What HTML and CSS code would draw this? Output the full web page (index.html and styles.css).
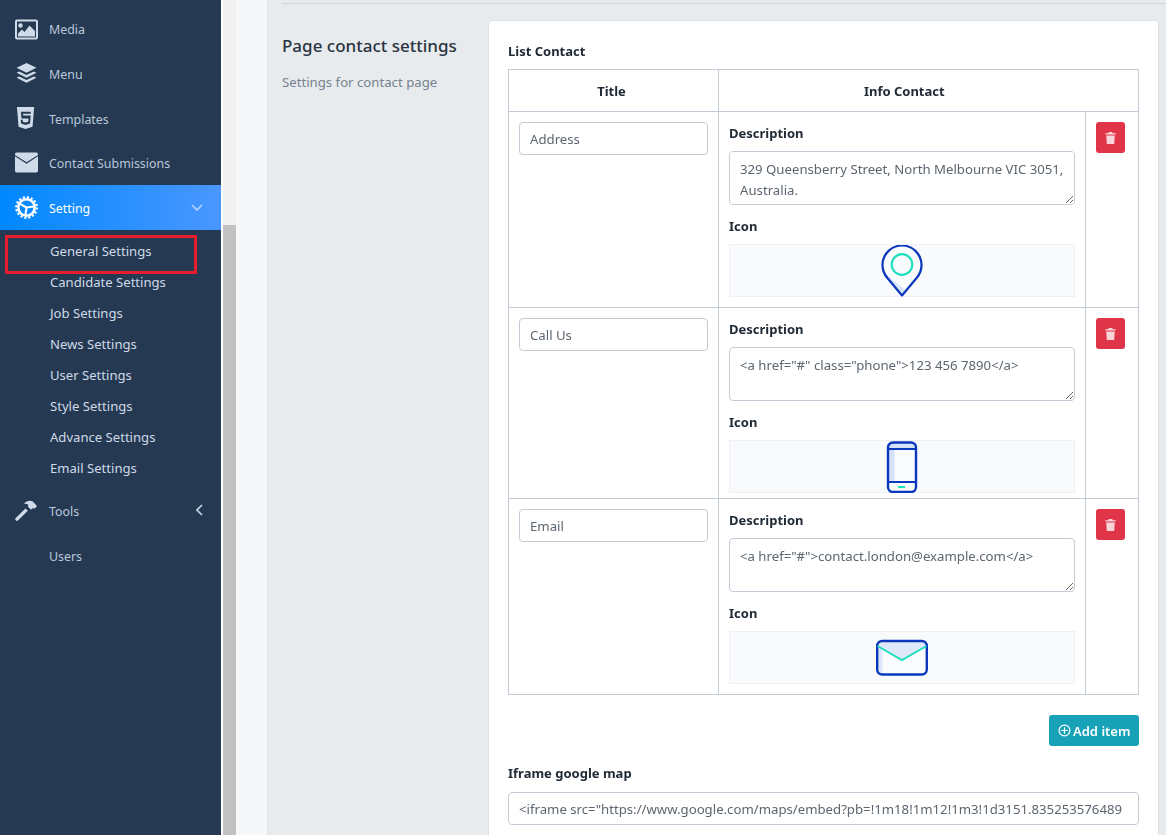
FILE: index.html
```html
<!DOCTYPE html>
<html lang="en">
<head>
    <meta charset="UTF-8">
    <title>Page contact settings</title>
    <link rel="stylesheet" href="styles.css">
</head>
<body>
    <aside class="sidebar">
        <a class="nav-item">
            <svg class="nav-icon" viewBox="0 0 23 20"><path fill="#cfdbe8" fill-rule="evenodd" d="M2 0h19a2 2 0 0 1 2 2v16a2 2 0 0 1-2 2H2a2 2 0 0 1-2-2V2a2 2 0 0 1 2-2zm0 2v16h19V2z"/><circle cx="5.5" cy="6" r="2.2" fill="#cfdbe8"/><path fill="#cfdbe8" d="M3 17v-3l4-4 2.5 2.500 5-6.500L20 11.500V17z"/></svg>
            <span>Media</span>
        </a>
        <a class="nav-item">
            <svg class="nav-icon" viewBox="0 0 22 20"><path fill="#cfdbe8" d="M11 0l9.500 4.600L11 9.200 1.500 4.600zM4 8l7 3.400L18 8l2.500 1.300L11 14 1.500 9.300zM4 12.800l7 3.400 7-3.400 2.500 1.300L11 18.800 1.500 14.100z"/></svg>
            <span>Menu</span>
        </a>
        <a class="nav-item">
            <svg class="nav-icon" viewBox="0 0 22 24"><path fill="#cfdbe8" fill-rule="evenodd" d="M1 0h18l-1.700 20.500L10 23l-7.300-2.500zM5.200 5l.6 7h7.300l-.3 3.400-2.800.9-2.800-.9-.2-2H5l.3 3.900 4.700 1.500 4.700-1.500.7-8.400H7.600L7.400 7h7.900l.2-2z"/></svg>
            <span>Templates</span>
        </a>
        <a class="nav-item">
            <svg class="nav-icon" viewBox="0 0 22 19"><path fill="#cfdbe8" d="M1.500 0h19A1.500 1.500 0 0 1 22 1.500v.8l-11 7-11-7v-.8A1.500 1.500 0 0 1 1.500 0zM0 3.600l11 7 11-7v13.900a1.500 1.500 0 0 1-1.500 1.500h-19A1.500 1.500 0 0 1 0 17.500z"/></svg>
            <span>Contact Submissions</span>
        </a>
        <a class="nav-item nav-active">
            <svg class="nav-icon" viewBox="0 0 22 22"><g fill="none" stroke="#fff"><circle cx="11" cy="11" r="7.800" stroke-width="2.400"/><circle cx="11" cy="11" r="9.800" stroke-width="2.200" stroke-dasharray="2 1.850"/><path stroke-width="2" d="M11 11L4 7M11 11l7-1M11 11l-1 7"/></g></svg>
            <span>Setting</span>
            <svg class="chevron-down" viewBox="0 0 12 7"><path fill="none" stroke="#b5d4fb" stroke-width="1.600" d="M1 1l5 5 5-5"/></svg>
        </a>
        <div class="submenu">
            <a>General Settings</a>
            <a>Candidate Settings</a>
            <a>Job Settings</a>
            <a>News Settings</a>
            <a>User Settings</a>
            <a>Style Settings</a>
            <a>Advance Settings</a>
            <a>Email Settings</a>
        </div>
        <a class="nav-item">
            <svg class="nav-icon" viewBox="0 0 22 20"><path fill="#cfdbe8" d="M.5 17.500L10 8l2.300 2.300-9.500 9.200a1.400 1.400 0 0 1-2-.1 1.400 1.400 0 0 1-.3-1.900zM8.500 3.500C11 .5 15 0 17 1.500l4 4.300-2.300 2.500-1.500-.8-1.800 1.800-3-3 .3-1.800c-1.200-1-3-1.300-4.700-.5z"/></svg>
            <span>Tools</span>
            <svg class="chevron-left" viewBox="0 0 7 12"><path fill="none" stroke="#c9d6e6" stroke-width="1.600" d="M6 1L1 6l5 5"/></svg>
        </a>
        <a class="nav-item nav-plain"><span>Users</span></a>
        <div class="highlight-box"></div>
    </aside>

    <div class="scroll-track"><div class="scroll-thumb"></div></div>
    <div class="gutter"></div>

    <main class="main">
        <hr class="divider">
        <section class="settings-group">
            <div class="group-info">
                <h2>Page contact settings</h2>
                <p>Settings for contact page</p>
            </div>
            <div class="card">
                <label class="field-label list-label">List Contact</label>
                <table class="contact-table">
                    <thead>
                        <tr>
                            <th class="col-title">Title</th>
                            <th class="col-info">Info Contact</th>
                            <th class="col-action"></th>
                        </tr>
                    </thead>
                    <tbody>
                        <tr class="row-first">
                            <td><input class="form-input" type="text" value="Address"></td>
                            <td class="info-cell">
                                <label class="field-label">Description</label>
                                <textarea class="form-input form-area">329 Queensberry Street, North Melbourne VIC 3051, Australia.</textarea>
                                <label class="field-label icon-label">Icon</label>
                                <div class="icon-box">
                                    <svg class="contact-icon" viewBox="0 0 52 52">
                                        <path fill="#fafbfd" d="M26 50.500L11.200 32.700A19.500 19.500 0 1 1 40.800 32.700z"/>
                                        <path fill="#d6e2f6" d="M6.800 20C8 30 18 36 30 45.700L26 50.500L11.200 32.700A19.500 19.500 0 0 1 6.800 20z"/>
                                        <path fill="none" stroke="#0b37bd" stroke-width="2.200" stroke-linejoin="round" d="M26 50.500L11.200 32.700A19.500 19.500 0 1 1 40.800 32.700z"/>
                                        <circle cx="26" cy="19.500" r="10.300" fill="none" stroke="#1fe0bd" stroke-width="2.200"/>
                                    </svg>
                                </div>
                            </td>
                            <td><button class="btn-delete"><svg viewBox="0 0 12 14"><path fill="#f9d5da" d="M4 0h4l.7 1.500H12V3H0V1.500h3.300zM1 4h10l-.7 10H1.700z"/></svg></button></td>
                        </tr>
                        <tr class="row-second">
                            <td><input class="form-input" type="text" value="Call Us"></td>
                            <td class="info-cell">
                                <label class="field-label">Description</label>
                                <textarea class="form-input form-area">&lt;a href="#" class="phone"&gt;123 456 7890&lt;/a&gt;</textarea>
                                <label class="field-label icon-label">Icon</label>
                                <div class="icon-box">
                                    <svg class="contact-icon" viewBox="0 0 52 52">
                                        <rect x="12" y="1" width="28" height="50" rx="5" fill="#fafbfd"/>
                                        <path fill="#d6e2f6" d="M12 7a5 5 0 0 1 5-5h18a5 5 0 0 1 5 5v1H18.500v33H12z"/>
                                        <rect x="12" y="1.500" width="28" height="49.500" rx="5" fill="none" stroke="#0b37bd" stroke-width="2.400"/>
                                        <path fill="none" stroke="#0b37bd" stroke-width="2" d="M12 8h28M12 41h28"/>
                                        <rect x="22" y="45" width="7" height="2" fill="#1fe0bd"/>
                                    </svg>
                                </div>
                            </td>
                            <td><button class="btn-delete"><svg viewBox="0 0 12 14"><path fill="#f9d5da" d="M4 0h4l.7 1.500H12V3H0V1.500h3.300zM1 4h10l-.7 10H1.700z"/></svg></button></td>
                        </tr>
                        <tr class="row-third">
                            <td><input class="form-input" type="text" value="Email"></td>
                            <td class="info-cell">
                                <label class="field-label">Description</label>
                                <textarea class="form-input form-area">&lt;a href="#"&gt;contact.london@example.com&lt;/a&gt;</textarea>
                                <label class="field-label icon-label">Icon</label>
                                <div class="icon-box">
                                    <svg class="contact-icon" viewBox="0 0 52 52">
                                        <rect x="1" y="8.500" width="50" height="34" rx="5" fill="#fafbfd"/>
                                        <path fill="#dfe8f8" d="M1 13a5 5 0 0 1 5-5h40a5 5 0 0 1 5 5v1L26 28 6.500 17v25H1z"/>
                                        <rect x="1.200" y="9" width="49.600" height="33.500" rx="5" fill="none" stroke="#0b37bd" stroke-width="2.400"/>
                                        <path fill="none" stroke="#1fe0bd" stroke-width="2" d="M1.500 14L26 28l24.500-14"/>
                                    </svg>
                                </div>
                            </td>
                            <td><button class="btn-delete"><svg viewBox="0 0 12 14"><path fill="#f9d5da" d="M4 0h4l.7 1.500H12V3H0V1.500h3.300zM1 4h10l-.7 10H1.700z"/></svg></button></td>
                        </tr>
                    </tbody>
                </table>
                <div class="table-actions">
                    <button class="btn-add"><svg viewBox="0 0 14 14"><g fill="none" stroke="#fff" stroke-width="1.300"><circle cx="7" cy="7" r="5.800"/><path d="M7 3.500v7M3.500 7h7"/></g></svg>Add item</button>
                </div>
                <label class="field-label map-label">Iframe google map</label>
                <input class="form-input map-input" type="text" value='&lt;iframe src="https://www.google.com/maps/embed?pb=!1m18!1m12!1m3!1d3151.835253576489'>
            </div>
        </section>
    </main>
</body>
</html>
```

FILE: styles.css
```css
* {
    box-sizing: border-box;
}

html, body {
    height: 100%;
}

body {
    margin: 0;
    display: flex;
    height: 835px;
    overflow: hidden;
    font-family: "Noto Sans", Arial, sans-serif;
    font-size: 13.200px;
    color: #212b36;
    background: #f6f7f9;
}

/* sidebar */
.sidebar {
    position: relative;
    flex: 0 0 221px;
    padding-top: 7px;
    font-size: 12.400px;
    background: #253953;
    color: #b9c8da;
}

.nav-item {
    display: flex;
    align-items: center;
    height: 44.500px;
    padding-left: 15px;
}

.nav-item span {
    padding-top: 2px;
}

.nav-item:first-child span {
    padding-top: 0;
}

.nav-icon {
    flex: 0 0 23px;
    width: 23px;
    height: 23px;
    margin-right: 11px;
}

.nav-plain {
    padding-left: 49px;
}

.nav-plain span {
    padding-top: 4px;
}

.nav-active {
    background: linear-gradient(90deg, #0088ff, #4a97ff);
    color: #fff;
}

.chevron-down {
    width: 12px;
    height: 7px;
    margin-left: auto;
    margin-right: 18px;
}

.chevron-left {
    width: 7px;
    height: 12px;
    margin-left: auto;
    margin-right: 18px;
}

.submenu {
    padding: 5.500px 0 5px 50px;
    font-size: 13.100px;
    color: #cfd9e6;
}

.submenu a {
    display: block;
    height: 31px;
    line-height: 33px;
}

.highlight-box {
    position: absolute;
    left: 5px;
    top: 235px;
    width: 192px;
    height: 39px;
    border: 3px solid #e81c2a;
}

/* scrollbar + gutter */
.scroll-track {
    flex: 0 0 15px;
    border-left: 2px solid #fff;
    background: #f1f1f1;
    padding-top: 225px;
}

.scroll-thumb {
    height: 610px;
    background: #c1c1c1;
}

.gutter {
    flex: 0 0 31px;
    background: #f6f7f9;
}

/* main */
.main {
    flex: 1;
    min-width: 0;
    padding: 3px 0 0 14px;
    background: #e8ebee;
    border-left: 1px solid #e0e3e7;
}

.divider {
    height: 1px;
    margin: 0;
    border: 0;
    background: #cfd4da;
}

.settings-group {
    display: flex;
    padding: 16px 7px 0 0;
}

.group-info {
    flex: 0 0 206px;
    padding-top: 13px;
}

.group-info h2 {
    margin: 0;
    font-size: 17px;
    font-weight: 500;
    line-height: 26px;
    color: #2a3340;
}

.group-info p {
    margin: 13px 0 0;
    line-height: 20px;
    color: #768290;
}

.card {
    flex: 1;
    min-width: 0;
    height: 900px;
    padding: 19px 19px 0;
    background: #fff;
    border-radius: 4px;
    border: 1px solid #dde1e6;
}

.field-label {
    display: block;
    font-size: 13px;
    font-weight: 700;
    line-height: 24px;
}

.list-label {
    height: 29px;
    line-height: 22px;
}

.contact-table {
    width: 631px;
    border-collapse: collapse;
    table-layout: fixed;
}

.contact-table th, .contact-table td {
    border: 1px solid #c3ccd6;
    padding: 10px;
    vertical-align: top;
}

.contact-table th {
    height: 42px;
    font-size: 13px;
    font-weight: 700;
    vertical-align: middle;
}

.contact-table .col-title {
    width: 210px;
    padding-right: 14px;
}

.contact-table .col-info {
    padding-left: 14px;
    border-right: 0;
}

.contact-table .col-action {
    width: 53px;
    border-left: 0;
}

.contact-table .info-cell {
    padding-top: 9px;
}

.contact-table .row-first td {
    padding-bottom: 10px;
}

.contact-table .row-second td {
    padding-bottom: 5px;
}

.contact-table .row-third td {
    padding-bottom: 10px;
}

.form-input {
    display: block;
    width: 100%;
    height: 33px;
    padding: 6px 10px;
    font-family: inherit;
    font-size: 13.200px;
    line-height: 21px;
    color: #5c6670;
    background: #fff;
    border: 1px solid #c3ccd6;
    border-radius: 4px;
}

.form-area {
    height: 54px;
    margin-top: 6px;
    padding-top: 7px;
    resize: vertical;
}

.icon-label {
    margin-top: 9px;
}

.icon-box {
    display: flex;
    justify-content: center;
    align-items: center;
    height: 53px;
    margin-top: 6px;
    background: #f9fafc;
    border: 1px solid #eef0f3;
}

.contact-icon {
    width: 52px;
    height: 52px;
    flex: none;
}

.btn-delete {
    display: flex;
    align-items: center;
    justify-content: center;
    width: 29px;
    height: 31px;
    padding: 0;
    background: #e03448;
    border: 0;
    border-radius: 3px;
}

.btn-delete svg {
    width: 11px;
    height: 12px;
}

.table-actions {
    display: flex;
    justify-content: flex-end;
    padding-top: 20px;
}

.btn-add {
    display: flex;
    align-items: center;
    gap: 2px;
    width: 90px;
    height: 31px;
    padding: 0 0 0 9px;
    font-family: inherit;
    font-size: 13px;
    font-weight: 600;
    color: #fff;
    background: #17a2b8;
    border: 0;
    border-radius: 3px;
}

.btn-add svg {
    width: 13px;
    height: 13px;
}

.map-label {
    margin-top: 15px;
}

.map-input {
    margin-top: 7px;
}
```
